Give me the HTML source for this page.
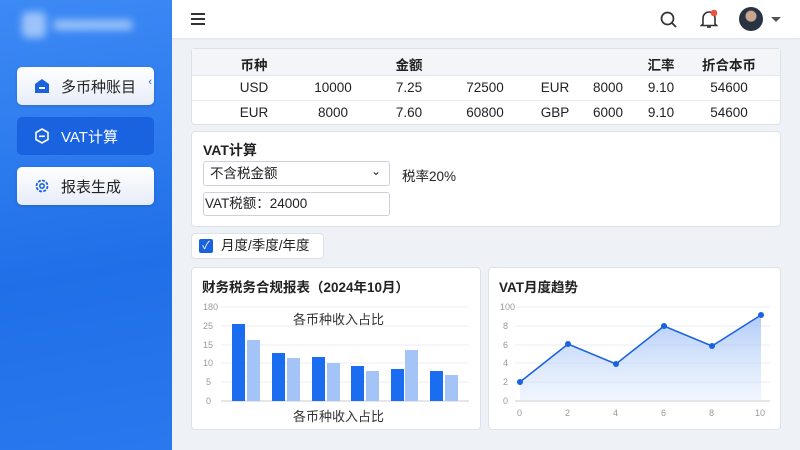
<!DOCTYPE html>
<html><head><meta charset="utf-8"><style>
*{margin:0;padding:0;box-sizing:border-box}
body{width:800px;height:450px;overflow:hidden;font-family:"Liberation Sans","Noto Sans CJK SC",sans-serif;background:#eef1f6;position:relative;color:#222}
.side{position:absolute;left:0;top:0;width:172px;height:450px;background:linear-gradient(170deg,#3d8af5,#1f6fe8 60%,#2a78ee)}
.logo{position:absolute;left:22px;top:12px;width:110px;height:26px;filter:blur(4px);opacity:.5}
.btn{position:absolute;left:17px;width:137px;height:38px;border-radius:5px;font-size:15px;display:flex;align-items:center;padding-left:16px;gap:10px}
.w{background:linear-gradient(#fff,#e6ecf8);color:#222;box-shadow:0 1px 3px rgba(0,0,0,.15)}
.b{background:#1a63e0;color:#fff}
.hdr{position:absolute;left:172px;top:0;right:0;height:38px;background:#fff;box-shadow:0 1px 2px rgba(0,0,0,.06)}
.card{position:absolute;background:#fff;border:1px solid #dde2ea;border-radius:4px}
.t{position:absolute;font-size:13.5px;transform:translateX(-50%);white-space:nowrap}
.row{position:absolute;left:0;right:0;border-top:1px solid #e3e7ee}
.ax{position:absolute;font-size:9px;color:#999}
</style></head><body>
<div class="side">
<div class="logo"><div style="position:absolute;left:0;top:0;width:24px;height:26px;background:#fff;border-radius:6px"></div><div style="position:absolute;left:32px;top:8px;width:78px;height:10px;background:#fff"></div></div>
<div class="btn w" style="top:67px"><svg width="18" height="18" viewBox="0 0 18 18"><path d="M2 7 9 2l7 5v9H2z" fill="#1a63e0"/><rect x="6" y="10" width="6" height="2" fill="#fff"/></svg><span>多币种账目</span><span style="position:absolute;right:2px;top:9px;color:#1a63e0;font-size:11px">‹</span></div>
<div class="btn b" style="top:117px"><svg width="18" height="18" viewBox="0 0 18 18"><path d="M9 2l6 3.5v7L9 16l-6-3.5v-7z" fill="none" stroke="#fff" stroke-width="1.6"/><rect x="6" y="8.5" width="6" height="1.6" fill="#fff"/></svg><span>VAT计算</span></div>
<div class="btn w" style="top:167px"><svg width="18" height="18" viewBox="0 0 18 18"><circle cx="9" cy="9" r="5.5" fill="none" stroke="#1a63e0" stroke-width="1.8" stroke-dasharray="3 1.3"/><circle cx="9" cy="9" r="2.2" fill="none" stroke="#1a63e0" stroke-width="1.6"/></svg><span>报表生成</span></div>
</div>
<div class="hdr">
<div style="position:absolute;left:19px;top:13px;width:14px;height:2px;background:#333;box-shadow:0 5px 0 #333,0 10px 0 #333"></div>
<svg style="position:absolute;left:487px;top:10px" width="20" height="20" viewBox="0 0 20 20"><circle cx="8.5" cy="8.5" r="6" fill="none" stroke="#333" stroke-width="1.7"/><path d="M13 13l4 4" stroke="#333" stroke-width="1.8"/></svg>
<svg style="position:absolute;left:526px;top:8px" width="22" height="22" viewBox="0 0 22 22"><path d="M5 16V10a6 6 0 0 1 12 0v6l1.5 1.5h-15z" fill="none" stroke="#333" stroke-width="1.6"/><path d="M9 19h4" stroke="#333" stroke-width="1.6"/><circle cx="16" cy="5" r="3.3" fill="#e8533f"/></svg>
<div style="position:absolute;left:567px;top:7px;width:24px;height:24px;border-radius:50%;background:radial-gradient(circle at 50% 38%,#c9a78f 0 5px,#2a3342 6px)"></div>
<div style="position:absolute;left:599px;top:17px;border:5px solid transparent;border-top:5px solid #555"></div>
</div>
<div class="card" style="left:191px;top:48px;width:590px;height:77px">
<div style="position:absolute;left:0;right:0;top:0;height:26px;background:#f3f5f8"></div>
<div class="row" style="top:26px"></div><div class="row" style="top:51px"></div>
<div class="t" style="left:62px;top:5px;font-weight:bold">币种</div><div class="t" style="left:217px;top:5px;font-weight:bold">金额</div><div class="t" style="left:469px;top:5px;font-weight:bold">汇率</div><div class="t" style="left:537px;top:5px;font-weight:bold">折合本币</div>
<div class="t" style="left:62px;top:31px">USD</div><div class="t" style="left:141px;top:31px">10000</div><div class="t" style="left:217px;top:31px">7.25</div><div class="t" style="left:293px;top:31px">72500</div><div class="t" style="left:363px;top:31px">EUR</div><div class="t" style="left:416px;top:31px">8000</div><div class="t" style="left:469px;top:31px">9.10</div><div class="t" style="left:537px;top:31px">54600</div>
<div class="t" style="left:62px;top:56px">EUR</div><div class="t" style="left:141px;top:56px">8000</div><div class="t" style="left:217px;top:56px">7.60</div><div class="t" style="left:293px;top:56px">60800</div><div class="t" style="left:363px;top:56px">GBP</div><div class="t" style="left:416px;top:56px">6000</div><div class="t" style="left:469px;top:56px">9.10</div><div class="t" style="left:537px;top:56px">54600</div>
</div>
<div class="card" style="left:191px;top:131px;width:590px;height:96px">
<div style="position:absolute;left:11px;top:8px;font-size:14px;font-weight:bold">VAT计算</div>
<div style="position:absolute;left:11px;top:29px;width:187px;height:25px;border:1px solid #ccd2dc;border-radius:3px;font-size:13.5px;padding:3px 6px;line-height:17px">不含税金额<span style="position:absolute;right:8px;top:1px;font-size:12px">⌄</span></div>
<div style="position:absolute;left:210px;top:33px;font-size:13.5px">税率20%</div>
<div style="position:absolute;left:11px;top:60px;width:187px;height:24px;border:1px solid #ccd2dc;border-radius:3px;font-size:13.5px;padding:2px 1px;line-height:18px">VAT税额：24000</div>
</div>
<div class="card" style="left:191px;top:233px;width:133px;height:26px;font-size:13.5px;padding:3px 0 0 29px;line-height:18px">月度/季度/年度<div style="position:absolute;left:7px;top:5px;width:14px;height:14px;background:#1a63e0;border-radius:2px;color:#fff;font-size:11px;line-height:14px;text-align:center">✓</div></div>
<div class="card" style="left:191px;top:267px;width:290px;height:163px">
<div style="position:absolute;left:10px;top:8px;font-size:13.5px;font-weight:bold">财务税务合规报表（2024年10月）</div>
<svg style="position:absolute;left:0;top:0" width="290" height="163"><g stroke="#eceef2"><path d="M29 39H277M29 58H277M29 77H277M29 95H277M29 114H277"/></g><path d="M29 133H277" stroke="#ccc"/>
<g fill="#1a6cf0"><rect x="40" y="56" width="13" height="77"/><rect x="80" y="85" width="13" height="48"/><rect x="120" y="89" width="13" height="44"/><rect x="159" y="98" width="13" height="35"/><rect x="199" y="101" width="13" height="32"/><rect x="238" y="103" width="13" height="30"/></g>
<g fill="#a4c4f7"><rect x="55" y="72" width="13" height="61"/><rect x="95" y="90" width="13" height="43"/><rect x="135" y="95" width="13" height="38"/><rect x="174" y="103" width="13" height="30"/><rect x="213" y="82" width="13" height="51"/><rect x="253" y="107" width="13" height="26"/></g></svg>
<div class="ax" style="left:11px;top:34px">180</div><div class="ax" style="left:11px;top:53px">25</div><div class="ax" style="left:11px;top:72px">15</div><div class="ax" style="left:11px;top:90px">10</div><div class="ax" style="left:14px;top:109px">5</div><div class="ax" style="left:14px;top:128px">0</div>
<div style="position:absolute;left:101px;top:41px;font-size:13px;color:#333">各币种收入占比</div>
<div style="position:absolute;left:101px;top:138px;font-size:13px;color:#333">各币种收入占比</div>
</div>
<div class="card" style="left:488px;top:267px;width:293px;height:163px">
<div style="position:absolute;left:10px;top:8px;font-size:13.5px;font-weight:bold">VAT月度趋势</div>
<svg style="position:absolute;left:0;top:0" width="293" height="163"><defs><linearGradient id="g" x1="0" y1="0" x2="0" y2="1"><stop offset="0" stop-color="#8fb5f5" stop-opacity=".7"/><stop offset="1" stop-color="#dbe8fd" stop-opacity=".4"/></linearGradient></defs>
<g stroke="#eceef2"><path d="M26 39H281M26 58H281M26 77H281M26 95H281M26 114H281"/></g><path d="M26 133H281" stroke="#ccc"/>
<path d="M31 114L79 76 127 96 175 58 223 78 272 47V133H31z" fill="url(#g)"/>
<path d="M31 114L79 76 127 96 175 58 223 78 272 47" fill="none" stroke="#1a63e0" stroke-width="1.6"/>
<g fill="#1a63e0"><circle cx="31" cy="114" r="3"/><circle cx="79" cy="76" r="3"/><circle cx="127" cy="96" r="3"/><circle cx="175" cy="58" r="3"/><circle cx="223" cy="78" r="3"/><circle cx="272" cy="47" r="3"/></g></svg>
<div class="ax" style="left:11px;top:34px">100</div><div class="ax" style="left:14px;top:53px">8</div><div class="ax" style="left:14px;top:72px">6</div><div class="ax" style="left:14px;top:90px">4</div><div class="ax" style="left:14px;top:109px">2</div><div class="ax" style="left:14px;top:128px">0</div>
<div class="ax" style="left:28px;top:140px">0</div><div class="ax" style="left:76px;top:140px">2</div><div class="ax" style="left:124px;top:140px">4</div><div class="ax" style="left:172px;top:140px">6</div><div class="ax" style="left:220px;top:140px">8</div><div class="ax" style="left:266px;top:140px">10</div>
</div>
</body></html>
